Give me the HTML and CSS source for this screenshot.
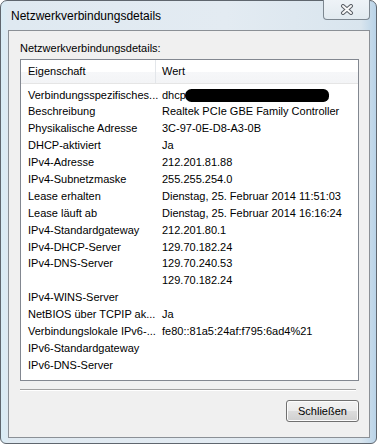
FILE: index.html
```html
<!DOCTYPE html>
<html lang="de">
<head>
    <meta charset="UTF-8">
    <title>Netzwerkverbindungsdetails</title>
    <link rel="stylesheet" href="styles.css">
</head>
<body>
    <div class="window">
        <div class="titlebar">
            <span class="title">Netzwerkverbindungsdetails</span>
            <div class="close">
                <svg width="14" height="11" viewBox="0 0 14 11">
                    <path d="M3 2 L11 9 M11 2 L3 9" stroke="#5a5f66" stroke-width="4" stroke-linecap="round" fill="none"/>
                    <path d="M3 2 L11 9 M11 2 L3 9" stroke="#fafafa" stroke-width="2" stroke-linecap="round" fill="none"/>
                </svg>
            </div>
        </div>
        <div class="client">
            <div class="caption">Netzwerkverbindungsdetails:</div>
            <div class="listview">
                <div class="lv-head">
                    <div class="lv-col first">Eigenschaft</div>
                    <div class="lv-col">Wert</div>
                </div>
                <div class="lv-rows">
                    <div class="cell">Verbindungsspezifisches...</div><div class="cell val">dhcp<span class="blackout"></span></div>
                    <div class="cell">Beschreibung</div><div class="cell val">Realtek PCIe GBE Family Controller</div>
                    <div class="cell">Physikalische Adresse</div><div class="cell val">3C-97-0E-D8-A3-0B</div>
                    <div class="cell">DHCP-aktiviert</div><div class="cell val">Ja</div>
                    <div class="cell">IPv4-Adresse</div><div class="cell val">212.201.81.88</div>
                    <div class="cell">IPv4-Subnetzmaske</div><div class="cell val">255.255.254.0</div>
                    <div class="cell">Lease erhalten</div><div class="cell val">Dienstag, 25. Februar 2014 11:51:03</div>
                    <div class="cell">Lease läuft ab</div><div class="cell val">Dienstag, 25. Februar 2014 16:16:24</div>
                    <div class="cell">IPv4-Standardgateway</div><div class="cell val">212.201.80.1</div>
                    <div class="cell">IPv4-DHCP-Server</div><div class="cell val">129.70.182.24</div>
                    <div class="cell">IPv4-DNS-Server</div><div class="cell val">129.70.240.53</div>
                    <div class="cell"></div><div class="cell val">129.70.182.24</div>
                    <div class="cell">IPv4-WINS-Server</div><div class="cell val"></div>
                    <div class="cell">NetBIOS über TCPIP ak...</div><div class="cell val">Ja</div>
                    <div class="cell">Verbindungslokale IPv6-...</div><div class="cell val">fe80::81a5:24af:f795:6ad4%21</div>
                    <div class="cell">IPv6-Standardgateway</div><div class="cell val"></div>
                    <div class="cell">IPv6-DNS-Server</div><div class="cell val"></div>
                </div>
            </div>
            <div class="separator"></div>
            <div class="footer">
                <button class="btn">Schließen</button>
            </div>
        </div>
    </div>
</body>
</html>
```

FILE: styles.css
```css
body {
    margin: 0;
    background: #ffffff;
    font-family: "Liberation Sans", Arial, sans-serif;
    color: #000;
}

.window {
    width: 377px;
    height: 444px;
    box-sizing: border-box;
    border: 1px solid #5f666e;
    border-radius: 7px 7px 6px 6px;
    background: linear-gradient(90deg, #d8ecf6 0, #dfe9f1 8px, #e3ebf2 60%, #d9e5ee 96%, #b9d3e8 100%);
    padding: 0 6px 5px 7px;
    display: flex;
    flex-direction: column;
}

.titlebar {
    height: 29px;
    display: flex;
    justify-content: space-between;
    align-items: flex-start;
}

.title {
    font-size: 12px;
    line-height: 16px;
    padding-top: 7px;
    padding-left: 3px;
}

.close {
    width: 45px;
    height: 19px;
    margin-top: -1px;
    border: 1px solid #7d8790;
    border-top: none;
    border-radius: 0 0 4px 4px;
    background: linear-gradient(#eef3f7, #e2eaf0);
    display: flex;
    align-items: center;
    justify-content: center;
}

.client {
    flex: 1;
    background: #f0f0f0;
    border: 1px solid #8b9096;
    display: flex;
    flex-direction: column;
    padding: 10px 10px 0 11px;
    font-size: 11px;
}

.caption {
    line-height: 14px;
}

.listview {
    margin-top: 4px;
    height: 322px;
    box-sizing: border-box;
    border: 1px solid #828790;
    background: #fff;
}

.lv-head {
    height: 24px;
    box-sizing: border-box;
    display: grid;
    grid-template-columns: 135px 1fr;
    border-bottom: 1px solid #e5e5e5;
    background: linear-gradient(#ffffff 0, #ffffff 50%, #f6f7f9 50%, #f3f4f6 100%);
}

.lv-col {
    padding-left: 6px;
    line-height: 23px;
}

.lv-col.first {
    padding-left: 7px;
    border-right: 1px solid #e3e6ea;
}

.lv-rows {
    padding-top: 2.5px;
    display: grid;
    grid-template-columns: 135px 1fr;
    grid-auto-rows: 16.9px;
}

.cell {
    padding-left: 7px;
    line-height: 16.9px;
    white-space: nowrap;
}

.cell.val {
    padding-left: 6px;
}

.blackout {
    display: inline-block;
    width: 144px;
    height: 13px;
    margin-left: -1px;
    vertical-align: -3px;
    background: #000;
    border-radius: 7px 6px 6px 7px;
}

.separator {
    margin-top: 8px;
    margin-right: 3px;
    height: 1px;
    background: #a0a0a0;
    border-bottom: 1px solid #ffffff;
}

.footer {
    display: flex;
    justify-content: flex-end;
    margin-top: 9px;
}

.btn {
    width: 73px;
    height: 22px;
    font-family: "Liberation Sans", Arial, sans-serif;
    font-size: 11px;
    color: #000;
    border: 1px solid #707070;
    border-radius: 3px;
    background: linear-gradient(#f2f2f2 0, #ebebeb 50%, #dddddd 50%, #cfcfcf 100%);
    box-shadow: inset 0 0 0 1px #fcfcfc;
    padding: 0;
}
```
